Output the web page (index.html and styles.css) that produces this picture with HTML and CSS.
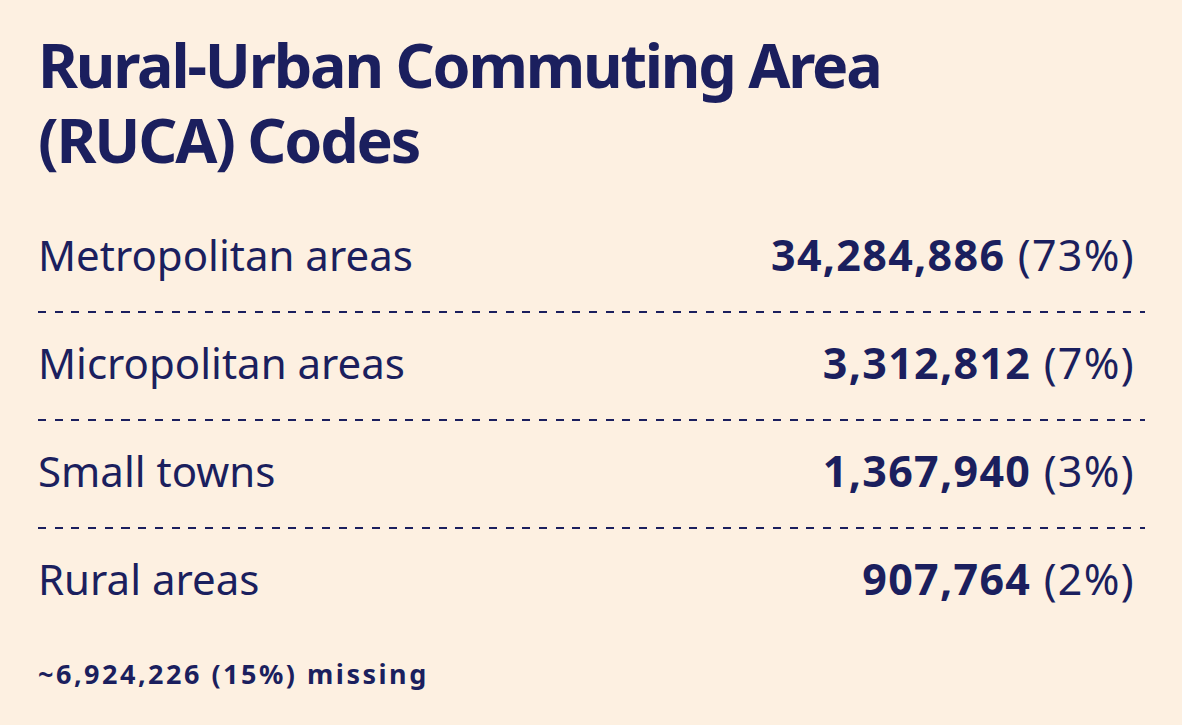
FILE: index.html
```html
<!DOCTYPE html>
<html lang="en">
<head>
<meta charset="utf-8">
<title>RUCA Codes</title>
<link rel="stylesheet" href="styles.css">
</head>
<body>
<main class="card">
  <h1 class="title">Rural-Urban Commuting Area<br>(RUCA) Codes</h1>
  <ul class="rows">
    <li class="row"><span class="label">Metropolitan areas</span><span class="value"><b>34,284,886</b> (73%)</span></li>
    <li class="row"><span class="label">Micropolitan areas</span><span class="value"><b>3,312,812</b> (7%)</span></li>
    <li class="row"><span class="label">Small towns</span><span class="value"><b>1,367,940</b> (3%)</span></li>
    <li class="row"><span class="label">Rural areas</span><span class="value"><b>907,764</b> (2%)</span></li>
  </ul>
  <p class="missing">~6,924,226 (15%) missing</p>
</main>
</body>
</html>
```

FILE: styles.css
```css
html, body {
  margin: 0;
  padding: 0;
  background: #fdf0e1;
}
body {
  font-family: "Noto Sans", "Open Sans", sans-serif;
  color: #1b1f5e;
}
.card {
  width: 1107px;
  padding: 26.8px 0 0 38px;
}
.title {
  margin: 0;
  font-size: 61px;
  line-height: 75px;
  font-weight: 700;
  letter-spacing: -2.2px;
}
.rows {
  list-style: none;
  margin: 27.5px 0 0 0;
  padding: 0;
}
.row {
  display: flex;
  justify-content: space-between;
  align-items: baseline;
  padding: 25.3px 10px 33px 0;
  line-height: 50px;
  font-size: 43px;
  background-image: repeating-linear-gradient(to right, #1b1f5e 0 8px, transparent 8px 16.7px);
  background-size: 100% 2px;
  background-repeat: no-repeat;
  background-position: left bottom;
}
.row:last-child {
  background: none;
}
.label {
  font-size: 42px;
}
.value {
  letter-spacing: 1.3px;
}
.value b {
  font-weight: 700;
}
.missing {
  margin: 19px 0 0 0;
  font-size: 27px;
  font-weight: 700;
  line-height: 36px;
  letter-spacing: 2.5px;
}
```
